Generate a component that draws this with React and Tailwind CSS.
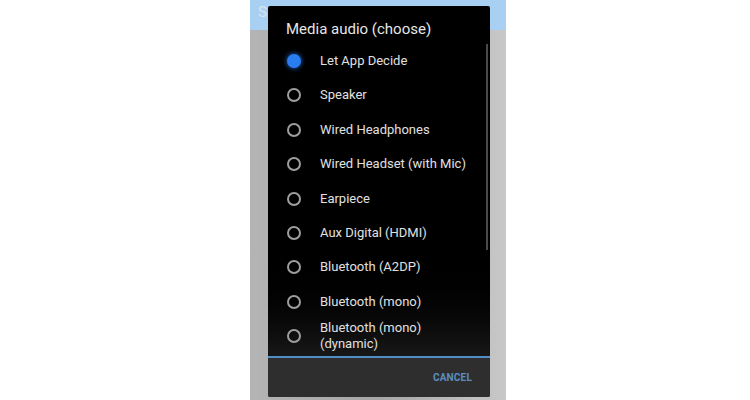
import React from "react";

const items = [
  "Let App Decide",
  "Speaker",
  "Wired Headphones",
  "Wired Headset (with Mic)",
  "Earpiece",
  "Aux Digital (HDMI)",
  "Bluetooth (A2DP)",
  "Bluetooth (mono)",
];

function Radio({ on }) {
  if (on) {
    return (
      <div className="w-[14px] h-[14px] rounded-full bg-[#2a7df0] shadow-[0_0_4px_1px_rgba(40,120,240,0.6)]" />
    );
  }
  return <div className="w-[14px] h-[14px] rounded-full border-2 border-[#9e9e9e]" />;
}

export default function App() {
  return (
    <div
      className="w-[750px] h-[400px] bg-white flex overflow-hidden"
      style={{ fontFamily: "Roboto, 'Noto Sans', sans-serif" }}
    >
      <div className="ml-[250px] w-[256px] h-full relative flex flex-col">
        <div className="h-[30px] bg-[#a8d0f2] px-[8px] pt-[3px] text-[15px] text-[#d8e4ee] leading-[18px]">
          S
        </div>
        <div className="flex-1 bg-gradient-to-r from-[#b4b4b4] via-[#a6a6a6] to-[#c8c8c8]" />

        <div className="absolute left-[18px] top-[6px] w-[222px] h-[391px] rounded-[2px] flex flex-col overflow-hidden bg-gradient-to-b from-black via-black via-[62%] to-[#2a2a2a]">
          <div className="h-[37.8px] pl-[18px] pt-[14px] text-[15px] leading-[18px] text-[#e6e6e6]">
            Media audio (choose)
          </div>
          {items.map((t, i) => (
            <div key={t} className="h-[34.4px] flex items-center">
              <div className="w-[52px] pl-[19px]">
                <Radio on={i === 0} />
              </div>
              <span className="text-[13px] text-[#e0e0e0] leading-[16px]">{t}</span>
            </div>
          ))}
          <div className="h-[34px] flex items-center">
            <div className="w-[52px] pl-[19px]">
              <Radio on={false} />
            </div>
            <span className="text-[13px] text-[#e0e0e0] leading-[16px]">
              Bluetooth (mono)
              <br />
              (dynamic)
            </span>
          </div>
          <div className="mt-[3px] h-[2px] bg-[#4f8fc6]" />
          <div className="flex-1 bg-[#2e2e2e] flex items-center justify-end pr-[18px]">
            <span className="text-[10px] font-bold text-[#5b8ec0] tracking-[0.2px]">CANCEL</span>
          </div>
          <div className="absolute right-[2px] top-[38px] h-[206px] w-[2px] bg-[#4a4a4a]" />
        </div>
      </div>
    </div>
  );
}
